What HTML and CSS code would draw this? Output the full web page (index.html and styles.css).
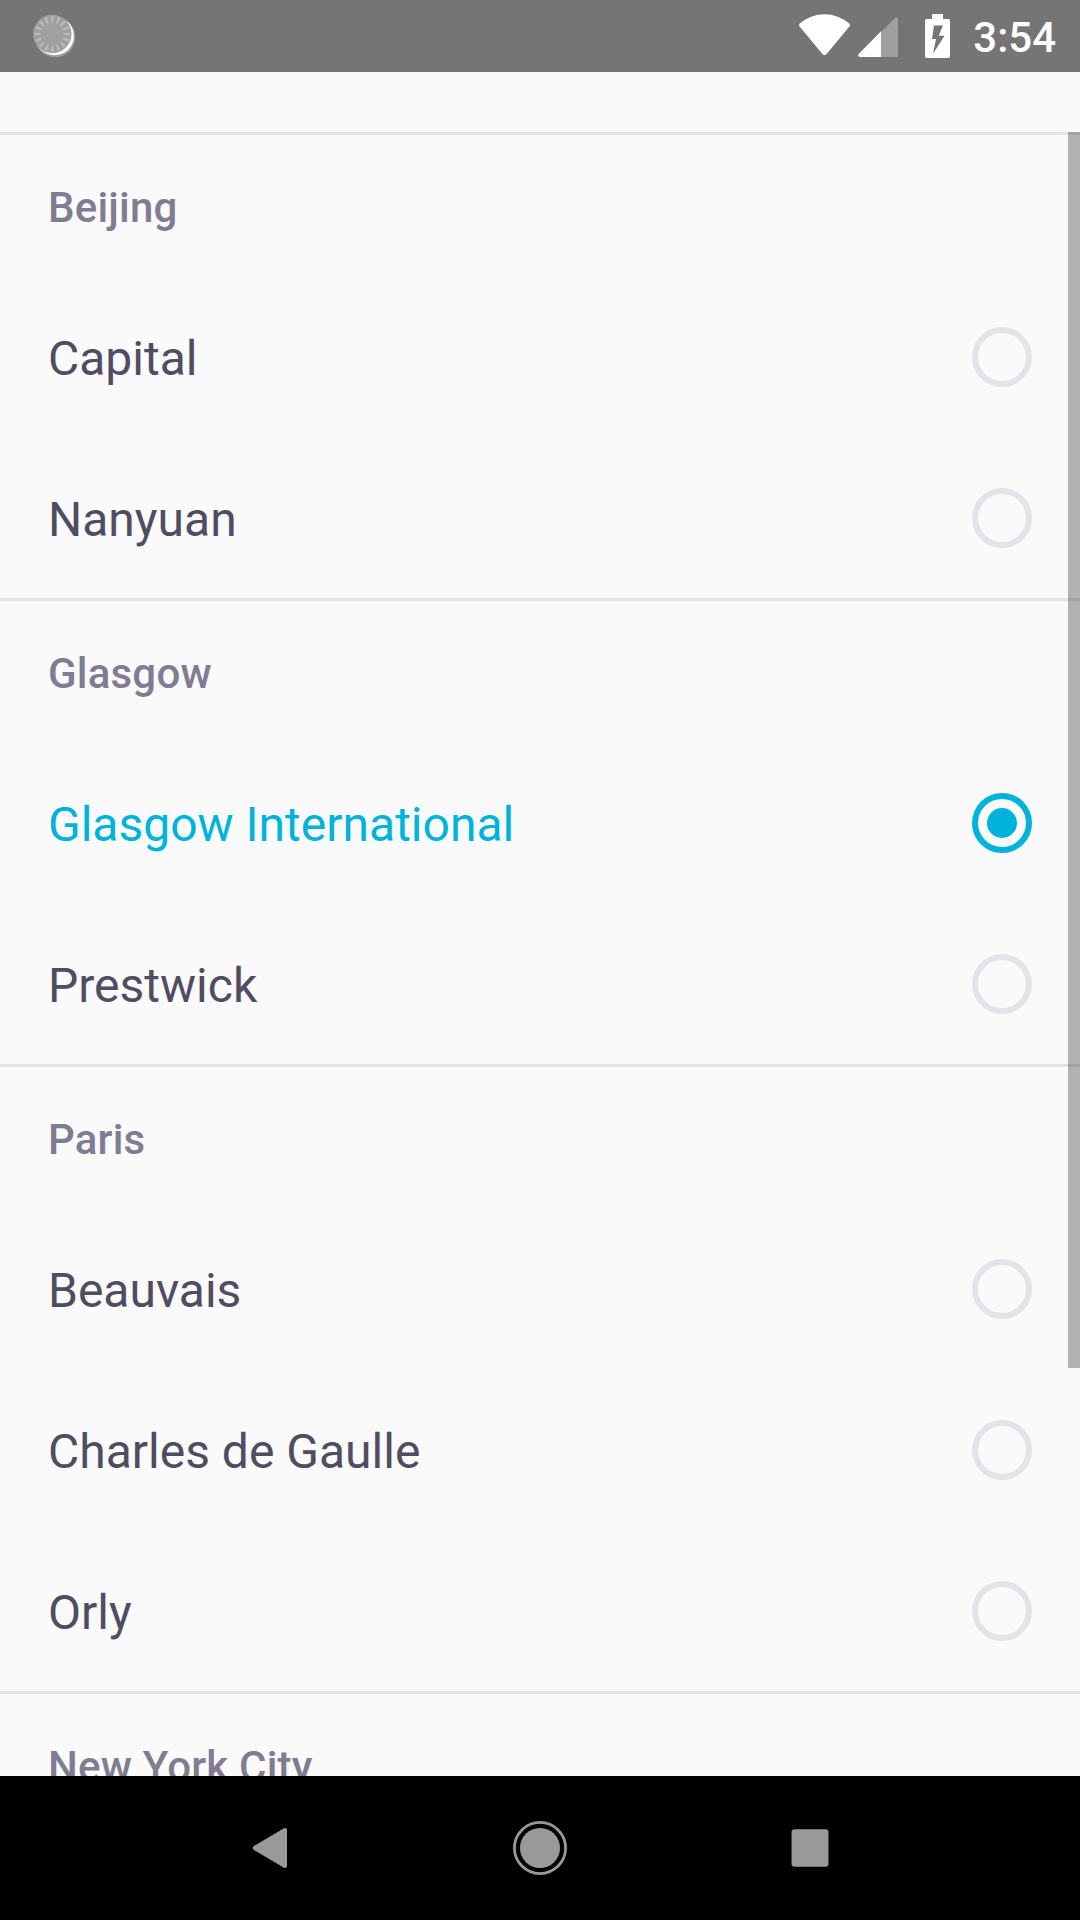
FILE: index.html
```html
<!DOCTYPE html>
<html lang="en">
<head>
<meta charset="utf-8">
<title>Airports</title>
<link rel="stylesheet" href="styles.css">
</head>
<body>
<div class="screen">
  <header class="status">
    <svg class="status-sync" width="46" height="48" viewBox="0 0 46 48">
      <circle cx="24" cy="27" r="20.3" fill="#fff" opacity=".3"/>
      <circle cx="23.6" cy="26" r="19.3" fill="#fff"/>
      <circle cx="21.3" cy="24" r="19.2" fill="#a0a0a0"/>
      <circle cx="21.3" cy="24" r="14.7" fill="none" stroke="#bdbdbd" stroke-width="6" pathLength="160" stroke-dasharray="3.5 6.5" stroke-dashoffset="1.75"/>
    </svg>
    <div class="status-icons">
      <svg class="wifi" width="54" height="44" viewBox="0 0 54 44">
        <path d="M1.5 10.8Q12.5 1.2 26.5 1.2T51.5 10.8Q52.6 12 51.6 13.3L28.6 41Q26.5 43 24.4 41L1.4 13.3Q.4 12 1.5 10.8Z" fill="#fff"/>
      </svg>
      <svg class="signal" width="42" height="42" viewBox="0 0 42 42">
        <path d="M23 15L37.5.7Q40 -.5 40 2V38.5Q40 40 38.5 40H23Z" fill="#9f9f9f"/>
        <path d="M23 14.3V40H2Q-.8 39.5.7 37Z" fill="#fff"/>
      </svg>
      <svg class="battery" width="25" height="44" viewBox="0 0 25 44">
        <path d="M7 0H18V5H23.3Q25 5 25 6.7V42.3Q25 44 23.3 44H1.7Q0 44 0 42.3V6.7Q0 5 1.7 5H7Z" fill="#fff"/>
        <path d="M9 11.6H18L13.7 21.8H19.5L8 39.7L11 25H7Z" fill="#757575"/>
      </svg>
      <span class="clock">3:54</span>
    </div>
  </header>

  <main class="list">
    <section class="group">
      <h2 class="group-title">Beijing</h2>
      <div class="row"><span>Capital</span><i class="radio"></i></div>
      <div class="row"><span>Nanyuan</span><i class="radio"></i></div>
    </section>
    <section class="group">
      <h2 class="group-title">Glasgow</h2>
      <div class="row selected"><span>Glasgow International</span><i class="radio"></i></div>
      <div class="row"><span>Prestwick</span><i class="radio"></i></div>
    </section>
    <section class="group">
      <h2 class="group-title">Paris</h2>
      <div class="row"><span>Beauvais</span><i class="radio"></i></div>
      <div class="row"><span>Charles de Gaulle</span><i class="radio"></i></div>
      <div class="row"><span>Orly</span><i class="radio"></i></div>
    </section>
    <section class="group">
      <h2 class="group-title">New York City</h2>
    </section>
    <div class="scrollbar"></div>
  </main>

  <nav class="navbar">
    <svg width="60" height="60" viewBox="0 0 60 60"><path d="M13.8 28L43.5 10.6Q47 9 47 12.5V47.5Q47 51 43.5 49.4L13.8 32Q11.6 30 13.8 28Z" fill="#999"/></svg>
    <svg width="60" height="60" viewBox="0 0 60 60"><circle cx="30" cy="30" r="25.6" fill="none" stroke="#999" stroke-width="2.8"/><circle cx="30" cy="30" r="20" fill="#999"/></svg>
    <svg width="60" height="60" viewBox="0 0 60 60"><rect x="11.5" y="11.3" width="37" height="37.4" rx="3" fill="#999"/></svg>
  </nav>
</div>
</body>
</html>
```
FILE: styles.css
```css
* { box-sizing: border-box; }

body {
  margin: 0;
  font-family: Roboto, sans-serif;
  background: #fafafa;
}

.screen {
  display: flex;
  flex-direction: column;
  width: 1080px;
  height: 1920px;
  overflow: hidden;
}

.status {
  flex: none;
  display: flex;
  justify-content: space-between;
  align-items: flex-start;
  height: 72px;
  padding: 0 24px 0 31px;
  background: #757575;
}

.status-sync { margin-top: 10px; }

.status-icons { display: flex; align-items: flex-start; }
.wifi { margin-top: 13px; }
.signal { margin: 17px 0 0 6px; }
.battery { margin: 14px 23px 0 25px; }

.clock {
  color: #fff;
  font-size: 42px;
  font-weight: 500;
  line-height: 50px;
  margin-top: 13px;
}

.list {
  position: relative;
  flex: 1;
  min-height: 0;
  padding-top: 60px;
  overflow: hidden;
}

.group { border-top: 3px solid #e3e3e8; }

.group-title {
  height: 141px;
  margin: 0;
  padding: 48px 48px 0;
  color: #817c92;
  font-size: 42px;
  font-weight: 500;
  line-height: 50px;
  letter-spacing: .2px;
}

.row {
  display: flex;
  justify-content: space-between;
  height: 161px;
  padding: 51px 48px 0;
  color: #504c62;
  font-size: 48px;
  line-height: 64px;
}

.radio {
  width: 60px;
  height: 60px;
  border: 6px solid #e4e3ea;
  border-radius: 50%;
}

.selected { color: #00b3da; }

.selected .radio {
  padding: 9px;
  border-color: #00b3da;
}

.selected .radio::before {
  content: "";
  display: block;
  height: 30px;
  border-radius: 50%;
  background: #00b3da;
}

/* overlays the rows at the right edge */
.scrollbar {
  position: absolute;
  top: 60px;
  right: 0;
  width: 12px;
  height: 1236px;
  background: rgba(0, 0, 0, .286);
}

.navbar {
  flex: none;
  display: flex;
  justify-content: center;
  align-items: center;
  gap: 210px;
  height: 144px;
  background: #000;
}
```
